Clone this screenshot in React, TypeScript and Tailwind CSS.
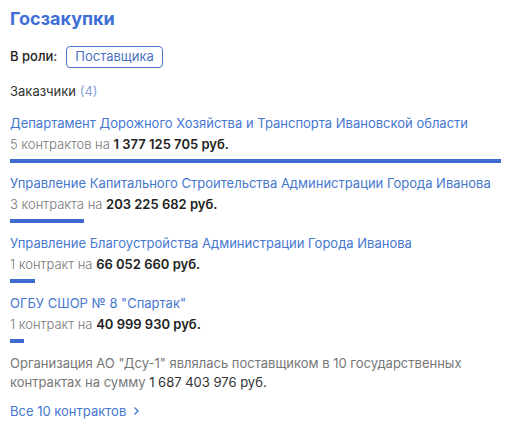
import React from 'react';

interface Customer {
  name: string;
  count: string;
  sum: string;
  share: number;
}

const customers: Customer[] = [
  { name: 'Департамент Дорожного Хозяйства и Транспорта Ивановской области', count: '5 контрактов', sum: '1 377 125 705 руб.', share: 100 },
  { name: 'Управление Капитального Строительства Администрации Города Иванова', count: '3 контракта', sum: '203 225 682 руб.', share: 15 },
  { name: 'Управление Благоустройства Администрации Города Иванова', count: '1 контракт', sum: '66 052 660 руб.', share: 5.1 },
  { name: 'ОГБУ СШОР № 8 "Спартак"', count: '1 контракт', sum: '40 999 930 руб.', share: 2.9 },
];

export default function App() {
  return (
    <div className="w-[505px] h-[425px] bg-white pl-[10px] pr-[4px] pt-[5px] text-[13px] text-[#333] font-['Inter',sans-serif]">
      <h2 className="text-[18px] leading-[28px] font-bold text-[#3f6fd6]">Госзакупки</h2>

      <div className="mt-[13px] flex items-center gap-[9px]">
        <span className="font-medium text-[#222]">В роли:</span>
        <span className="h-[22px] px-[8px] flex items-center rounded-[4px] border border-[#4a72c4] text-[#4a72c4]">
          Поставщика
        </span>
      </div>

      <div className="mt-[14px] leading-[18px] text-[#333]">
        Заказчики <span className="text-[#8aa3d8]">(4)</span>
      </div>

      <ul className="mt-[14px]">
        {customers.map((c) => (
          <li key={c.name} className="mb-[11px]">
            <a href="#" className="block leading-[18px] text-[#4677cf] whitespace-nowrap">{c.name}</a>
            <div className="mt-[3px] leading-[18px] text-[#777] font-light">
              {c.count} на <span className="font-semibold text-[#222]">{c.sum}</span>
            </div>
            <div className="mt-[6px] h-[4px] bg-[#3f6bd0]" style={{ width: `${c.share}%` }} />
          </li>
        ))}
      </ul>

      <p className="mt-[2px] leading-[19px] text-[#777] pr-[16px]">
        Организация АО "Дсу-1" являлась поставщиком в 10 государственных контрактах на сумму{' '}
        <span className="text-[#333]">1 687 403 976 руб.</span>
      </p>

      <a href="#" className="mt-[10px] flex items-center gap-[7px] leading-[18px] text-[#4677cf]">
        Все 10 контрактов
        <svg width="7" height="10" viewBox="0 0 7 10" fill="none" stroke="currentColor" strokeWidth="1.4">
          <path d="M1.5 1.5 L5 5 L1.5 8.5" />
        </svg>
      </a>
    </div>
  );
}
